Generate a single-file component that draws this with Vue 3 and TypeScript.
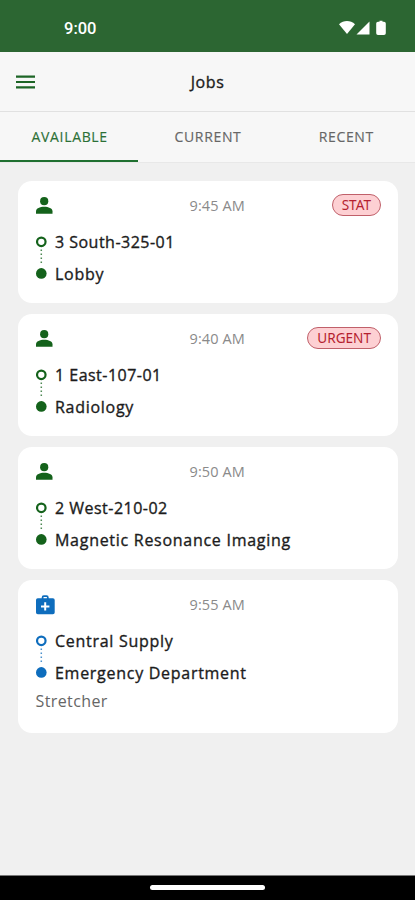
<script setup lang="ts">
import { ref } from 'vue'

interface Job {
  id: number
  kind: 'patient' | 'equipment'
  time: string
  priority?: string
  from: string
  to: string
  note?: string
}

const tabs: string[] = ['Available', 'Current', 'Recent']
const activeTab = ref<string>('Available')

const jobs: Job[] = [
  { id: 1, kind: 'patient', time: '9:45 AM', priority: 'STAT', from: '3 South-325-01', to: 'Lobby' },
  { id: 2, kind: 'patient', time: '9:40 AM', priority: 'URGENT', from: '1 East-107-01', to: 'Radiology' },
  { id: 3, kind: 'patient', time: '9:50 AM', from: '2 West-210-02', to: 'Magnetic Resonance Imaging' },
  { id: 4, kind: 'equipment', time: '9:55 AM', from: 'Central Supply', to: 'Emergency Department', note: 'Stretcher' },
]

// Room codes are set slightly tighter than department names.
const isRoom = (place: string): boolean => /\d/.test(place)
</script>

<template>
  <div class="screen">
    <div class="status-bar">
      <span class="clock">9:00</span>
      <svg class="status-icons" width="48" height="16" viewBox="0 0 48 16">
        <path d="M0 4.200C4.600-.1 11.400-.1 16 4.200L8 14Z" />
        <path d="M17.500 14.500L30.500 1.500V14.500Z" />
        <path d="M40.500 .7h3v1h1.500q1.800 0 1.800 1.800v9.700q0 1.800-1.800 1.800h-6q-1.800 0-1.800-1.800V3.500q0-1.800 1.800-1.800h1.500Z" />
      </svg>
    </div>

    <header class="app-bar">
      <button class="menu" aria-label="Menu">
        <svg width="19" height="14" viewBox="0 0 19 14">
          <path d="M0 .5h19v2.200H0zM0 5.900h19v2.200H0zM0 11.300h19v2.200H0z" />
        </svg>
      </button>
      <h1 class="title">Jobs</h1>
    </header>

    <nav class="tabs">
      <button
        v-for="tab in tabs"
        :key="tab"
        class="tab"
        :class="{ active: tab === activeTab }"
        @click="activeTab = tab"
      >{{ tab }}</button>
    </nav>

    <main class="list">
      <article v-for="job in jobs" :key="job.id" class="card" :class="job.kind">
        <div class="card-head">
          <svg v-if="job.kind === 'patient'" class="kind-icon" width="17" height="17" viewBox="0.300 0 17 17">
            <circle cx="8.500" cy="4.200" r="4.100" />
            <path d="M0.300 16.700V14.200C.3 11.300 4.200 9.700 8.500 9.700S16.800 11.300 16.800 14.200V16.700Z" />
          </svg>
          <svg v-else class="kind-icon" width="19" height="20" viewBox="0.300 0.500 19 20">
            <path
              fill-rule="evenodd"
              d="M6 3.800V2.900Q6 .8 8.100.8h2.800Q13 .8 13 2.900V3.800h4.200Q19 3.800 19 5.600V18Q19 19.800 17.200 19.800H2.100Q.3 19.800 .3 18V5.600Q.3 3.800 2.100 3.800ZM7.800 3.800h3.400V2.500H7.800ZM8.500 7.700v3.200H5.300v2h3.200v3.200h2v-3.200h3.200v-2h-3.200V7.700Z"
            />
          </svg>
          <time class="time">{{ job.time }}</time>
          <span v-if="job.priority" class="badge">{{ job.priority }}</span>
        </div>
        <div class="route">
          <svg class="track" width="11" height="43" viewBox="0 0 11 43">
            <circle class="ring" cx="5.300" cy="5.800" r="4.250" />
            <path class="dots" d="M5.300 13.500V29" />
            <circle cx="5.300" cy="37.400" r="5.300" />
          </svg>
          <div class="stops">
            <div class="stop" :class="{ room: isRoom(job.from) }">{{ job.from }}</div>
            <div class="stop" :class="{ room: isRoom(job.to) }">{{ job.to }}</div>
          </div>
        </div>
        <div v-if="job.note" class="note">{{ job.note }}</div>
      </article>
    </main>

    <footer class="nav-bar"><span class="handle"></span></footer>
  </div>
</template>

<style>
body {
  margin: 0;
}
</style>

<style scoped>
.screen {
  display: flex;
  flex-direction: column;
  height: 900px;
  background: #f0f0f0;
  color: #1c1c1c;
  font-family: 'Open Sans', 'Noto Sans', sans-serif;
}
button {
  border: 0;
  padding: 0;
  background: none;
  font-family: inherit;
}
svg {
  display: block;
}
.status-bar {
  display: flex;
  align-items: center;
  justify-content: space-between;
  box-sizing: border-box;
  height: 52px;
  padding: 3px 28px 0 64px;
  background: #2c6632;
  color: #fff;
}
.clock {
  padding-top: 2px;
  font: 500 16.500px/20px Roboto, sans-serif;
}
.status-icons {
  fill: #fff;
}
.app-bar {
  display: grid;
  grid-template-columns: 60px 1fr 60px;
  align-items: center;
  box-sizing: border-box;
  height: 60px;
  border-bottom: 1px solid #e1e1e1;
  background: #f7f7f7;
}
.menu {
  padding-left: 16px;
  fill: #1d6526;
}
.title {
  margin: 0;
  text-align: center;
  font-size: 16px;
  line-height: 24px;
  font-weight: 400;
  letter-spacing: 0.6px;
  -webkit-text-stroke: 0.35px currentColor;
}
.tabs {
  display: grid;
  grid-template-columns: repeat(3, 1fr);
  box-sizing: border-box;
  height: 51px;
  border-bottom: 1px solid #e8e8e8;
  background: #f7f7f7;
}
.tab {
  border-bottom: 2px solid transparent;
  color: #666;
  font-size: 14px;
  letter-spacing: 0.65px;
  text-indent: 1px;
  text-transform: uppercase;
  -webkit-text-stroke: 0.15px currentColor;
}
.tab.active {
  border-bottom-color: #1f7030;
  color: #2c7036;
}
.list {
  flex: 1;
  display: flex;
  flex-direction: column;
  gap: 11.700px;
  padding: 18.400px 17.500px 0 18px;
}
.card {
  --accent: #14621b;
  box-sizing: border-box;
  height: 121.300px;
  padding: 11.200px 16.500px 0 17.500px;
  border-radius: 14px;
  background: #fff;
}
.card.equipment {
  --accent: #0e6dbd;
  height: 152.500px;
}
.card-head {
  display: grid;
  grid-template-columns: 154px auto 1fr;
  align-items: center;
  height: 26px;
}
.kind-icon {
  fill: var(--accent);
}
.time {
  color: #8a8a8a;
  font-size: 14.500px;
  line-height: 20px;
  letter-spacing: 0.1px;
}
.badge {
  justify-self: end;
  box-sizing: border-box;
  height: 22px;
  margin-bottom: 1.500px;
  padding: 0 9px;
  border: 1px solid #c0606a;
  border-radius: 11px;
  background: #fdd0d3;
  color: #b51f30;
  font-family: 'Noto Sans', sans-serif;
  font-size: 13.600px;
  line-height: 20px;
}
.route {
  display: flex;
  gap: 8.500px;
  padding-top: 8.500px;
}
.track {
  margin-top: 9px;
  fill: var(--accent);
}
.ring {
  fill: none;
  stroke: var(--accent);
  stroke-width: 2.200;
}
.dots {
  stroke: var(--accent);
  stroke-width: 1.500;
  stroke-dasharray: 1.500 2.500;
  opacity: 0.75;
}
.stops {
  margin: -1px 0 1px;
}
.stop {
  height: 31.500px;
  font-size: 16px;
  line-height: 32px;
  letter-spacing: 0.72px;
  white-space: nowrap;
  -webkit-text-stroke: 0.35px currentColor;
}
.stop.room {
  letter-spacing: 0.48px;
}
.note {
  color: #666;
  font-size: 16px;
  line-height: 24px;
  letter-spacing: 0.4px;
}
.nav-bar {
  display: flex;
  align-items: center;
  justify-content: center;
  height: 24px;
  border-top: 1px solid #777;
  background: #000;
}
.handle {
  width: 115px;
  height: 5px;
  margin-bottom: 1px;
  border-radius: 3px;
  background: #fff;
}
</style>
